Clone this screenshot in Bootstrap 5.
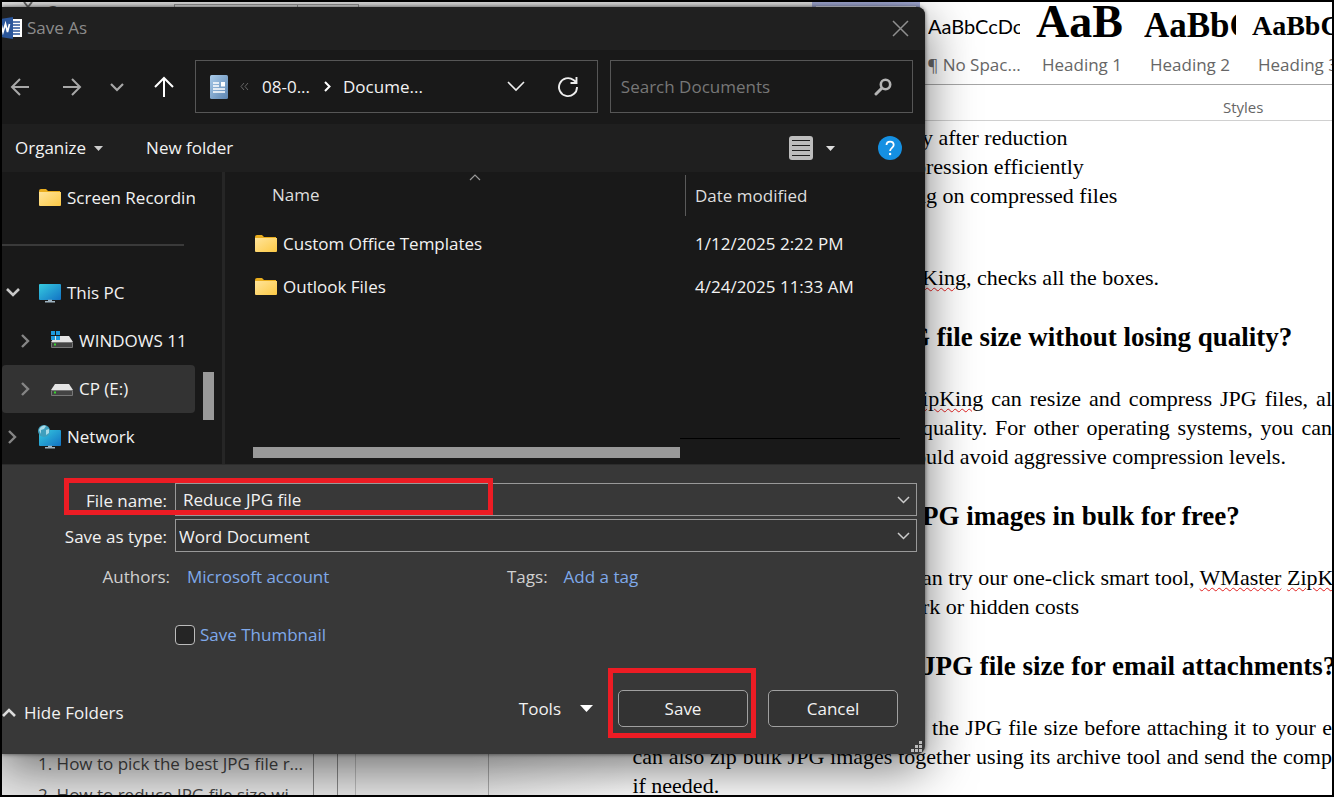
<!DOCTYPE html>
<html lang="en">
<head>
<meta charset="utf-8">
<meta name="viewport" content="width=device-width, initial-scale=1">
<title>Save As</title>
<link href="https://cdn.jsdelivr.net/npm/bootstrap@5.3.0/dist/css/bootstrap.min.css" rel="stylesheet">
<style>
  body { font-family: "Open Sans", "Noto Sans", sans-serif; font-size: 17px; line-height: 24px; background: #000; }
  svg { display: block; flex: none; }
  button, input, select { font: inherit; }
  .screen { height: 100vh; border: 2px solid #000; background: #fff; }

  /* Word window behind the dialog */
  .ribbon { height: 83px; border-bottom: 1px solid #a6a6a6; background: #fff; }
  .ribbon-tools { width: 60.9%; background: #e6e6e6; color: #555; padding-left: 20px; line-height: 20px; }
  .clipboard { width: 152px; flex: none; }
  .font-box { border: 1px solid #999; height: 30px; margin-top: 2px; width: 124px; }
  .font-box.size-box { width: 62px; margin-left: -1px; }
  .style-cell { width: 108px; flex: none; color: #000; overflow: hidden; padding: 0 8px; background: none; border: 0; }
  .style-cell.active { border: 4px solid #a3abd6; background: #e9ecf8; }
  .sample { height: 50px; line-height: 48px; white-space: nowrap; text-align: left; overflow: hidden; color: #000; font-family: "Liberation Serif", serif; font-weight: 700; }
  .sample.s-plain { font-family: Lato, sans-serif; font-weight: 400; font-size: 20px; }
  .sample.s-h1 { font-size: 46px; line-height: 40px; }
  .sample.s-h2 { font-size: 35px; }
  .sample.s-h3 { font-size: 28px; }
  .style-name { color: #666; line-height: 26px; white-space: nowrap; }
  .group-name { height: 36px; border-bottom: 1px solid #d0d0d0; font-size: 15px; color: #666; padding-left: 91.8%; }
  .paper { font: 22px/29px "Liberation Serif", serif; color: #000; padding-top: 2px; }
  .paper p, .paper h2 { margin: 0; white-space: nowrap; padding-left: calc(69.4% - 3px); }
  .paper h2 { font: 700 27px/29px "Liberation Serif", serif; margin: 31px 0 32px; }
  .paper .from-mid { padding-left: calc(69.4% - 10px); }
  .paper .from-far { padding-left: calc(69.4% - 16px); }
  .paper .from-margin { padding-left: 47.4%; }
  .paper .from-gap { padding-left: calc(69.4% + 7px); }
  .paper .full { text-align: justify; text-align-last: justify; }
  .paper .answer { margin-top: 53px; }
  .typo { text-decoration: underline wavy #e02020 1px; text-underline-offset: 2px; }
  .outline-pane { left: 0; bottom: 0; width: 47%; height: 50px; background: linear-gradient(90deg, #e8e8e8 75%, #fff); color: #444; overflow: hidden; }
  .outline-list { width: 312px; flex: none; padding: 3px 0 0 36px; line-height: 31px; border-right: 1px solid #888; white-space: nowrap; }
  .rule-a { width: 24px; border-right: 1px solid #888; }
  .rule-b { width: 18px; border-right: 1px solid #bbb; }
  .rule-c { width: 133px; border-right: 1px solid #aaa; }

  /* Dialog */
  .save-dialog { left: 0; top: 5px; width: 69.4%; background: #383838; color: #f2f2f2; border-radius: 0 8px 8px 0;
    box-shadow: 0 0 4px rgba(0,0,0,.6), 0 14px 50px rgba(0,0,0,.55); }
  .title-row { height: 43px; background: #202020; color: #8c8c8c; border-radius: 0 8px 0 0; padding: 0 16px 2px 0; gap: 5px; }
  .bare { background: none; border: 0; padding: 0; color: inherit; }
  .nav-row { background: #191919; padding: 10px 12px 11px 8px; gap: 12px; }
  .nav-tools { width: 173px; flex: none; }
  .well { height: 53px; border: 1px solid #565656; }
  .address { flex: 370 1 0; padding: 0 18px 0 14px; }
  .crumbs { gap: 12px; margin-left: 12px; }
  .search { flex: 272 1 0; padding: 0 20px 0 10px; }
  .search input { background: none; border: 0; color: #ddd; outline: 0; min-width: 0; }
  .search input::placeholder { color: #777; opacity: 1; }
  .command-row { height: 48px; background: #1f1f1f; padding: 0 23px 0 13px; gap: 43px; }
  .view-pick { gap: 13px; }
  .browse { height: 293px; background: #191919; border-bottom: 1px solid #2c2c2c; }
  .tree { width: 223px; flex: none; border-right: 3px solid #262626; padding-top: 2px; }
  .tree-list { width: 193px; }
  .tree-row { height: 48px; color: #f2f2f2; text-decoration: none; white-space: nowrap; overflow: hidden; gap: 5px; }
  .tree-row.active { background: #333; }
  .twist { width: 20px; margin-right: 7px; flex: none; }
  .deep .twist { width: 32px; padding-left: 12px; }
  .tree hr { width: 182px; margin: 22px 0 23px; border-top: 2px solid #3a3a3a; opacity: 1; }
  .thumb-y { width: 11px; height: 48px; background: #999; margin: 198px 0 0 8px; }
  .files { width: 100%; table-layout: fixed; }
  .files th { height: 50px; font-weight: 400; color: #dedede; padding: 0 0 4px 9px; }
  .files th:first-child { padding-left: 47px; width: 460px; }
  .files th:last-child { padding-left: 0; }
  .files th:last-child span { border-left: 1px solid #5a5a5a; display: block; line-height: 41px; padding-left: 9px; }
  .files tbody td { height: 43px; padding: 0 0 0 10px; }
  .files tbody td:first-child { padding-left: 29px; }
  .file-name { gap: 5px; }
  .sort-mark { left: 244px; top: 2px; }
  .thumb-x { width: 427px; height: 11px; background: #999; margin-left: 28px; }
  .track-x { height: 12px; border-top: 1px solid #000; margin-right: 25px; }
  .scroll-x { padding-bottom: 6px; }
  .form-part { padding: 18px 8px 0 0; }
  .field-row { display: grid; grid-template-columns: 165px 1fr; column-gap: 8px; align-items: center; margin-bottom: 3px; }
  .field-row label { text-align: right; padding-top: 2px; }
  .entry { height: 33px; border: 1px solid #999; background: #383838; }
  .entry input { background: none; border: 0; outline: 0; color: #f2f2f2; padding: 0 0 0 7px; min-width: 0; }
  .entry select { appearance: none; background: none; border: 0; outline: 0; color: #f2f2f2; padding: 2px 0 0 3px; flex: 1; }
  .entry.kind { background: #333; }
  .entry svg { margin-right: 6px; }
  .meta { color: #d0d0d0; padding-top: 10px; }
  .meta a, .thumb-check { color: #7fa9ea; text-decoration: none; }
  .meta-key { width: 168px; text-align: right; }
  .meta-author { width: 321px; padding-left: 17px; }
  .thumb-check { margin: 34px 0 0 173px; gap: 5px; }
  .thumb-check input { appearance: none; width: 20px; height: 20px; margin: 0; border: 1px solid #bbb; border-radius: 4px; background: #252525; }
  .actions { padding: 43px 27px 27px 0; gap: 20px; }
  .tools-menu { gap: 19px; margin-right: 5px; }
  .push { width: 130px; height: 37px; border: 1px solid #a0a0a0; border-radius: 5px; background: #333; color: #f2f2f2; padding: 0; }
  .grip { right: 2px; bottom: 1px; }
  .ring { border: 5px solid #ed1c24; pointer-events: none; }
  .ring-name { left: 62px; top: -5px; width: 429px; height: 37px; }
  .ring-save { left: -10px; top: -22px; width: 148px; height: 70px; }
</style>
</head>
<body>
<svg class="position-absolute" width="0" height="0" aria-hidden="true">
  <defs>
    <linearGradient id="fold" x2="1" y2="1"><stop stop-color="#ffe49a"/><stop offset="1" stop-color="#fcc945"/></linearGradient>
    <linearGradient id="glass" x2="1" y2="1"><stop stop-color="#36cbe0"/><stop offset="1" stop-color="#1272c4"/></linearGradient>
    <g id="folder"><path fill="#e9ad1e" d="M1 3q0-2 2-2h5l2 2h12v5H1z"/><path fill="url(#fold)" d="M1 4h22v13q0 1-1 1H2q-1 0-1-1z"/></g>
    <g id="screen"><rect x="1" y="1" width="22" height="16" rx="1" fill="url(#glass)"/><path stroke="#9fb3c0" stroke-width="1.500" d="M7 18.700h10M10 17.500h4"/></g>
    <g id="disk"><path fill="#e4e4e4" d="M5 5h14l4 6H1z"/><rect x="1" y="11" width="22" height="6" rx="1" fill="#777"/><path fill="#444" d="M2 12h20v4H2z"/><path fill="#38d430" d="M4 12.500h2v2H4z"/></g>
  </defs>
</svg>
<div class="screen position-relative overflow-hidden">

  <div class="ribbon d-flex overflow-hidden">
    <div class="ribbon-tools d-flex align-items-start flex-shrink-0">
      <div class="clipboard d-flex">
        <svg width="12" height="20" viewBox="0 0 12 20" fill="none" stroke="#666" stroke-width="2"><path d="M2 0l4 5 4-5"/></svg>
        <span class="ms-2 ps-1">Cut</span>
      </div>
      <span class="font-box"></span><span class="font-box size-box"></span>
    </div>
    <button class="style-cell active" aria-label="Normal"></button>
    <button class="style-cell d-flex flex-column align-items-center"><span class="sample s-plain w-100">AaBbCcDc</span><span class="style-name">¶ No Spac...</span></button>
    <button class="style-cell d-flex flex-column align-items-center"><span class="sample s-h1 w-100">AaB</span><span class="style-name">Heading 1</span></button>
    <button class="style-cell d-flex flex-column align-items-center"><span class="sample s-h2 w-100">AaBbC</span><span class="style-name">Heading 2</span></button>
    <button class="style-cell d-flex flex-column align-items-center"><span class="sample s-h3 w-100">AaBbCc</span><span class="style-name">Heading 3</span></button>
  </div>
  <div class="group-name d-flex align-items-center"><span class="pt-2">Styles</span></div>

  <main class="paper">
    <p>y after reduction</p>
    <p class="from-mid">pression efficiently</p>
    <p class="from-mid">ng on compressed files</p>
    <p class="answer"><span class="typo">King</span>, checks all the boxes.</p>
    <h2 class="from-far">G file size without losing quality?</h2>
    <p class="full"><span class="typo">ipKing</span> can resize and compress JPG files, al</p>
    <p class="full">quality. For other operating systems, you can</p>
    <p class="from-mid">ould avoid aggressive compression levels.</p>
    <h2>PG images in bulk for free?</h2>
    <p>an try our one-click smart tool, <span class="typo">WMaster</span> <span class="typo">ZipKing</span></p>
    <p>rk or hidden costs</p>
    <h2>JPG file size for email attachments?</h2>
    <p class="full from-gap">the JPG file size before attaching it to your e</p>
    <p class="full from-margin">can also zip bulk JPG images together using its archive tool and send the comp</p>
    <p class="from-margin">if needed.</p>
  </main>

  <aside class="outline-pane position-absolute d-flex">
    <div class="outline-list"><div>1. How to pick the best JPG file r...</div><div>2. How to reduce JPG file size wi...</div></div>
    <div class="rule-a"></div><div class="rule-b"></div><div class="rule-c"></div>
  </aside>

  <section class="save-dialog position-absolute" role="dialog" aria-label="Save As">
    <header class="title-row d-flex align-items-center">
      <svg width="20" height="22" viewBox="0 0 20 22"><path fill="#fff" d="M9 2h11v18H9z"/><path stroke="#2b569a" stroke-width="1.500" d="M11 5h7M11 8h7M11 11h7M11 14h7M11 17h7"/><path fill="#2b569a" d="M-2 2L11 0v22L-2 20z"/><path fill="none" stroke="#fff" stroke-width="1.700" d="M-1 7l2 8 2.500-8 2 8 2-8"/></svg>
      <span>Save As</span>
      <button class="bare ms-auto" aria-label="Close"><svg width="18" height="18" viewBox="0 0 18 18" stroke="#8f8f8f" stroke-width="1.500"><path d="M2 2l15 15M17 2L2 17"/></svg></button>
    </header>

    <div class="nav-row d-flex align-items-center">
      <div class="nav-tools d-flex align-items-center">
        <button class="bare" aria-label="Back"><svg width="20" height="20" viewBox="0 0 20 20" fill="none" stroke="#a8a8a8" stroke-width="2"><path d="M19 10H2M10 2l-8 8 8 8"/></svg></button>
        <button class="bare ms-4 ps-2" aria-label="Forward"><svg width="20" height="20" viewBox="0 0 20 20" fill="none" stroke="#a8a8a8" stroke-width="2"><path d="M1 10h17M10 2l8 8-8 8"/></svg></button>
        <button class="bare ms-4 ps-1" aria-label="Recent locations"><svg width="14" height="10" viewBox="0 0 14 10" fill="none" stroke="#a8a8a8" stroke-width="2.200"><path d="M1 2l6 6 6-6"/></svg></button>
        <button class="bare ms-4 ps-1" aria-label="Up"><svg width="22" height="22" viewBox="0 0 22 22" fill="none" stroke="#fff" stroke-width="2"><path d="M12 21V3M3 11l9-9 9 9"/></svg></button>
      </div>
      <div class="well address d-flex align-items-center">
        <svg width="18" height="24" viewBox="0 0 18 24"><defs><linearGradient id="doc" x2="1" y2="1"><stop stop-color="#a9cbea"/><stop offset="1" stop-color="#5c84b0"/></linearGradient></defs><rect width="18" height="24" rx="1.500" fill="url(#doc)"/><path stroke="#fff" stroke-width="1.300" d="M3 8h6M3 11h6M3 14h12M3 17h12"/><path fill="#fff" d="M11 7h4v4.500h-4z"/></svg>
        <div class="crumbs d-flex align-items-center">
          <svg width="10" height="8" viewBox="0 0 10 8" fill="none" stroke="#666"><path d="M4 0L1 3.500 4 7M8 0L5 3.500 8 7"/></svg>
          <span>08-0...</span>
          <svg width="9" height="11" viewBox="-2 0 9 11" fill="none" stroke="#fff" stroke-width="2"><path d="M1 1l4.500 4.500L1 10"/></svg>
          <span>Docume...</span>
        </div>
        <button class="bare ms-auto" aria-label="Previous locations"><svg width="18" height="11" viewBox="0 0 18 11" fill="none" stroke="#eee" stroke-width="1.600"><path d="M1 1l8 8 8-8"/></svg></button>
        <button class="bare ms-4 ps-2" aria-label="Refresh"><svg width="22" height="22" viewBox="0 0 22 22" fill="none" stroke="#eee" stroke-width="1.900"><path d="M20 11a9 9 0 1 1-3.500-7L19 6M19.500 1v6h-6"/></svg></button>
      </div>
      <div class="well search d-flex align-items-center">
        <input class="flex-grow-1 p-0" type="text" placeholder="Search Documents" aria-label="Search Documents">
        <svg width="18" height="18" viewBox="0 0 18 18" fill="none" stroke="#b4b4b4"><circle cx="11.500" cy="6.500" r="4.700" stroke-width="2.600"/><path stroke-width="3" stroke-linecap="round" d="M7.500 10.500L2 16"/></svg>
      </div>
    </div>

    <div class="command-row d-flex align-items-center">
      <button class="bare d-flex align-items-center">Organize <svg class="ms-2" width="9" height="5" viewBox="0 0 9 5" fill="#ccc"><path d="M0 0h9L4.500 5z"/></svg></button>
      <button class="bare">New folder</button>
      <button class="bare view-pick ms-auto d-flex align-items-center" aria-label="Change view">
        <svg width="24" height="24" viewBox="0 0 24 24"><rect width="24" height="24" rx="3" fill="#bdbdbd"/><path stroke="#1f1f1f" stroke-width="1.200" d="M3 4.500h18M3 9.500h18M3 14.500h18M3 19.500h18"/></svg>
        <svg width="9" height="5" viewBox="0 0 9 5" fill="#ddd"><path d="M0 0h9L4.500 5z"/></svg>
      </button>
      <button class="bare" aria-label="Help"><svg width="24" height="24" viewBox="0 0 24 24"><circle cx="12" cy="12" r="12" fill="#1590e2"/><path fill="none" stroke="#fff" stroke-width="1.800" d="M8.500 9c0-4.600 7.200-4.600 7.200 0 0 2.800-3.600 3-3.600 6"/><circle cx="12.100" cy="18" r="1.200" fill="#fff"/></svg></button>
    </div>

    <div class="browse d-flex">
      <nav class="tree d-flex" aria-label="Folders">
        <div class="tree-list">
          <a href="#" class="tree-row d-flex align-items-center"><span class="twist ms-1"></span><svg width="24" height="20" viewBox="0 0 24 20"><use href="#folder"/></svg><span>Screen Recordings</span></a>
          <hr>
          <a href="#" class="tree-row d-flex align-items-center"><span class="twist ms-1"><svg width="14" height="10" viewBox="0 0 14 10" fill="none" stroke="#c8c8c8" stroke-width="2.600"><path d="M1 1l6 6 6-6"/></svg></span><svg width="24" height="20" viewBox="0 0 24 20"><use href="#screen"/></svg><span>This PC</span></a>
          <a href="#" class="tree-row deep d-flex align-items-center"><span class="twist ms-1"><svg width="22" height="14" viewBox="-4 0 22 14" fill="none" stroke="#858585" stroke-width="2.400"><path d="M0 1l6 6-6 6"/></svg></span><svg width="24" height="20" viewBox="0 0 24 20"><use href="#disk"/><path fill="#1e9be0" d="M1 0h4v4H1zM6 0h4v4H6zM1 5h4v4H1zM6 5h4v4H6z"/></svg><span>WINDOWS 11</span></a>
          <a href="#" class="tree-row deep active d-flex align-items-center rounded-1"><span class="twist ms-1"><svg width="22" height="14" viewBox="-4 0 22 14" fill="none" stroke="#858585" stroke-width="2.400"><path d="M0 1l6 6-6 6"/></svg></span><svg width="24" height="20" viewBox="0 0 24 20"><use href="#disk"/></svg><span>CP (E:)</span></a>
          <a href="#" class="tree-row d-flex align-items-center"><span class="twist ms-1"><svg width="14" height="14" viewBox="-3 0 14 14" fill="none" stroke="#858585" stroke-width="2.400"><path d="M0 1l6 6-6 6"/></svg></span><svg width="24" height="24" viewBox="0 -4 24 24"><use href="#screen"/><circle cx="6" cy="2" r="6" fill="#3f9fbd"/><path fill="#a9dbe8" d="M1 1c2-5 6-5 7-4L6 0 3 1v4zM8 1l3-1v4L8 6z"/></svg><span>Network</span></a>
        </div>
        <div class="thumb-y"></div>
      </nav>
      <div class="flex-grow-1 d-flex flex-column position-relative">
        <svg class="sort-mark position-absolute" width="12" height="7" viewBox="0 0 12 7" fill="none" stroke="#999" stroke-width="1.200"><path d="M1 6l5-5 5 5"/></svg>
        <table class="files">
          <thead><tr><th scope="col">Name</th><th scope="col"><span>Date modified</span></th></tr></thead>
          <tbody>
            <tr><td><span class="file-name d-flex align-items-center"><svg width="24" height="20" viewBox="0 0 24 20"><use href="#folder"/></svg>Custom Office Templates</span></td><td>1/12/2025 2:22 PM</td></tr>
            <tr><td><span class="file-name d-flex align-items-center"><svg width="24" height="20" viewBox="0 0 24 20"><use href="#folder"/></svg>Outlook Files</span></td><td>4/24/2025 11:33 AM</td></tr>
          </tbody>
        </table>
        <div class="scroll-x mt-auto d-flex align-items-end"><div class="thumb-x"></div><div class="track-x flex-grow-1 mb-2"></div></div>
      </div>
    </div>

    <form class="form-part" onsubmit="return false">
      <div class="position-relative">
        <div class="field-row">
          <label for="fname">File name:</label>
          <div class="entry d-flex align-items-center"><input class="flex-grow-1" id="fname" type="text" value="Reduce JPG file"><svg width="13" height="8" viewBox="0 0 13 8" fill="none" stroke="#ccc" stroke-width="1.500"><path d="M1 1l5.500 5.500L12 1"/></svg></div>
        </div>
        <div class="ring ring-name position-absolute"></div>
      </div>
      <div class="field-row">
        <label for="ftype">Save as type:</label>
        <div class="entry kind d-flex align-items-center"><select id="ftype"><option>Word Document</option></select><svg width="13" height="8" viewBox="0 0 13 8" fill="none" stroke="#ccc" stroke-width="1.500"><path d="M1 1l5.500 5.500L12 1"/></svg></div>
      </div>
      <div class="meta d-flex">
        <span class="meta-key">Authors:</span><span class="meta-author"><a href="#">Microsoft account</a></span>
        <span class="ms-3">Tags:</span><a class="ms-3" href="#">Add a tag</a>
      </div>
      <div class="d-flex"><label class="thumb-check d-flex align-items-center"><input type="checkbox">Save Thumbnail</label></div>
    </form>
    <div class="actions d-flex align-items-center">
      <button class="bare d-flex align-items-center pt-2"><svg width="14" height="9" viewBox="0 0 14 9" fill="none" stroke="#ddd" stroke-width="2.600"><path d="M1 8l6-6 6 6"/></svg><span class="ms-2">Hide Folders</span></button>
      <button class="bare tools-menu d-flex align-items-center ms-auto">Tools <svg width="13" height="7" viewBox="0 0 13 7" fill="#fff"><path d="M0 0h13L6.500 7z"/></svg></button>
      <div class="position-relative"><button class="push">Save</button><div class="ring ring-save position-absolute"></div></div>
      <button class="push">Cancel</button>
    </div>
    <svg class="grip position-absolute" width="12" height="12" viewBox="0 0 12 12" fill="#bbb"><path d="M8 0h3v3H8zM8 4h3v3H8zM8 8h3v3H8zM4 4h3v3H4zM4 8h3v3H4zM0 8h3v3H0z"/></svg>
  </section>
</div>
<script src="https://cdn.jsdelivr.net/npm/bootstrap@5.3.0/dist/js/bootstrap.bundle.min.js"></script>
</body>
</html>
